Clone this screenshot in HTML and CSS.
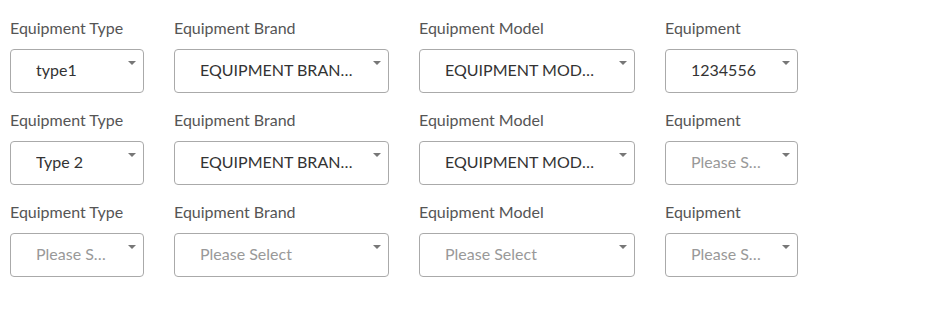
FILE: index.html
```html
<!DOCTYPE html>
<html lang="en">
<head>
    <meta charset="UTF-8">
    <meta name="viewport" content="width=device-width, initial-scale=1.0">
    <title>Equipment</title>
    <link rel="stylesheet" href="styles.css">
</head>
<body>
    <div class="equipment-list">
        <div class="equipment-row">
            <div class="field field-type">
                <label>Equipment Type</label>
                <div class="select"><span class="value">type1</span><span class="arrow"></span></div>
            </div>
            <div class="field field-brand">
                <label>Equipment Brand</label>
                <div class="select"><span class="value">EQUIPMENT BRAND ONE</span><span class="arrow"></span></div>
            </div>
            <div class="field field-model">
                <label>Equipment Model</label>
                <div class="select"><span class="value">EQUIPMENT MODEL ONE</span><span class="arrow"></span></div>
            </div>
            <div class="field field-equipment">
                <label>Equipment</label>
                <div class="select"><span class="value">1234556</span><span class="arrow"></span></div>
            </div>
        </div>
        <div class="equipment-row">
            <div class="field field-type">
                <label>Equipment Type</label>
                <div class="select"><span class="value">Type 2</span><span class="arrow"></span></div>
            </div>
            <div class="field field-brand">
                <label>Equipment Brand</label>
                <div class="select"><span class="value">EQUIPMENT BRAND TWO</span><span class="arrow"></span></div>
            </div>
            <div class="field field-model">
                <label>Equipment Model</label>
                <div class="select"><span class="value">EQUIPMENT MODEL TWO</span><span class="arrow"></span></div>
            </div>
            <div class="field field-equipment">
                <label>Equipment</label>
                <div class="select"><span class="value placeholder">Please Select</span><span class="arrow"></span></div>
            </div>
        </div>
        <div class="equipment-row">
            <div class="field field-type">
                <label>Equipment Type</label>
                <div class="select"><span class="value placeholder">Please Select</span><span class="arrow"></span></div>
            </div>
            <div class="field field-brand">
                <label>Equipment Brand</label>
                <div class="select"><span class="value placeholder">Please Select</span><span class="arrow"></span></div>
            </div>
            <div class="field field-model">
                <label>Equipment Model</label>
                <div class="select"><span class="value placeholder">Please Select</span><span class="arrow"></span></div>
            </div>
            <div class="field field-equipment">
                <label>Equipment</label>
                <div class="select"><span class="value placeholder">Please Select</span><span class="arrow"></span></div>
            </div>
        </div>
    </div>
</body>
</html>
```

FILE: styles.css
```css
body {
    font-family: Lato, "Open Sans", sans-serif;
    background-color: #fff;
    margin: 0;
    padding: 19px 10px 0;
    color: #333;
}
.equipment-row {
    display: flex;
    gap: 30px;
    margin-bottom: 18px;
}
.field-type {
    width: 134px;
}
.field-brand {
    width: 215px;
}
.field-model {
    width: 216px;
}
.field-equipment {
    width: 133px;
}
label {
    display: block;
    font-size: 16px;
    line-height: 18px;
    color: #555;
    margin-bottom: 12px;
}
.select {
    display: flex;
    box-sizing: border-box;
    height: 44px;
    border: 1px solid #aaa;
    border-radius: 4px;
    padding: 0 7px 0 25px;
}
.value {
    flex: 1;
    min-width: 0;
    padding-right: 18px;
    font-size: 16px;
    line-height: 40px;
    color: #333;
    white-space: nowrap;
    overflow: hidden;
    text-overflow: ellipsis;
}
.value.placeholder {
    color: #999;
}
.arrow {
    flex: none;
    margin-top: 11px;
    width: 0;
    height: 0;
    border-left: 4px solid transparent;
    border-right: 4px solid transparent;
    border-top: 4px solid #777;
}
```
